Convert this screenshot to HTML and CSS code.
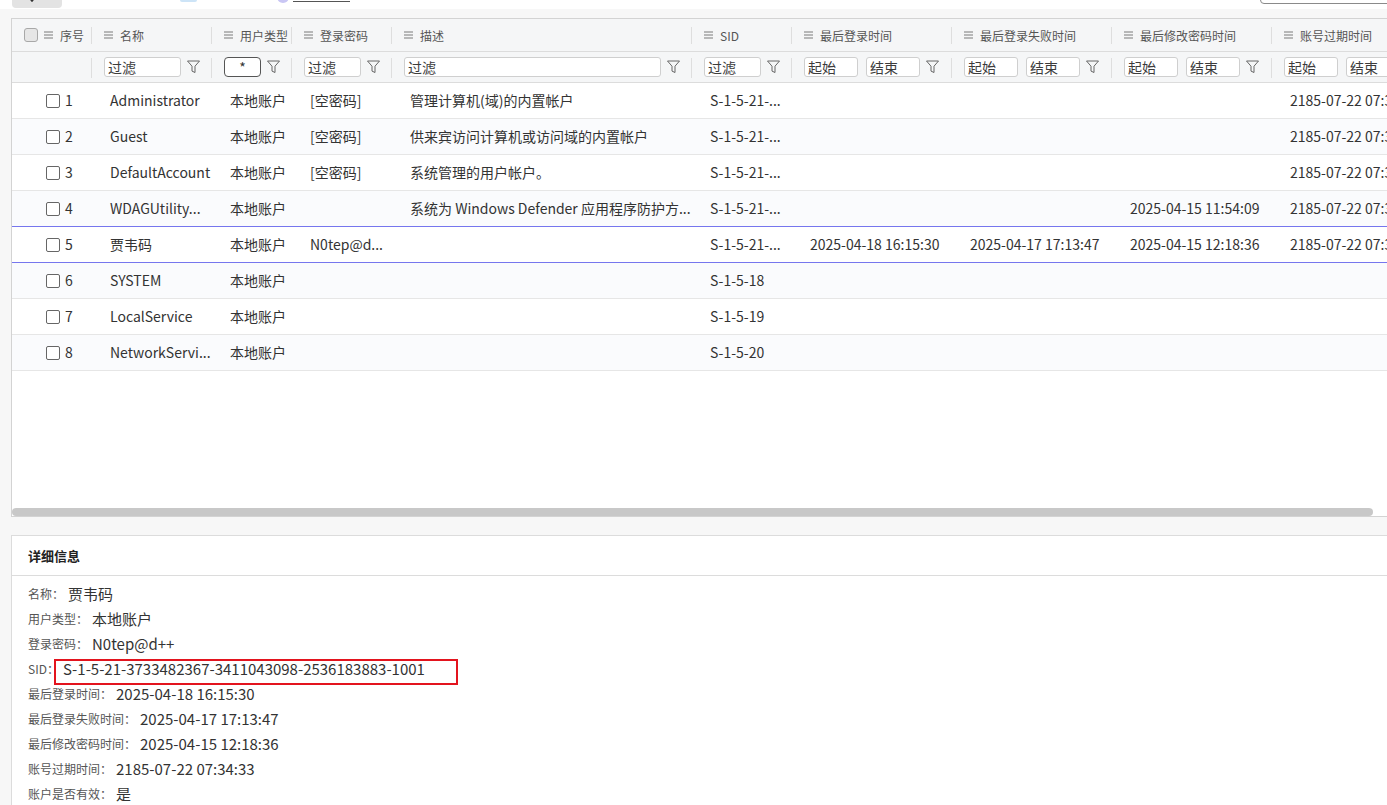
FILE: index.html
```html
<!DOCTYPE html>
<html lang="zh-CN">
<head>
    <meta charset="UTF-8">
    <title>用户账户</title>
    <link rel="stylesheet" href="styles.css">
</head>
<body>
    <div class="toolbar">
        <button class="tb-btn"><svg width="6" height="8" viewBox="0 0 6 8"><path d="M3 0v6M0.5 4l2.5 3 2.5-3" stroke="#333" stroke-width="1.6" fill="none"/></svg></button>
        <span class="tb-check"></span>
        <span class="tb-radio"></span>
        <span class="tb-link"></span>
        <input class="tb-search" type="text">
    </div>

    <div class="grid">
        <div class="grid-view">
            <div class="grid-row grid-head">
                <div class="hcell"><span class="cb cb-head"></span><svg class="menu" viewBox="0 0 9 8"><path d="M0 1h9M0 4h9M0 7h9"/></svg>序号</div>
                <div class="hcell"><svg class="menu" viewBox="0 0 9 8"><path d="M0 1h9M0 4h9M0 7h9"/></svg>名称</div>
                <div class="hcell"><svg class="menu" viewBox="0 0 9 8"><path d="M0 1h9M0 4h9M0 7h9"/></svg>用户类型</div>
                <div class="hcell"><svg class="menu" viewBox="0 0 9 8"><path d="M0 1h9M0 4h9M0 7h9"/></svg>登录密码</div>
                <div class="hcell"><svg class="menu" viewBox="0 0 9 8"><path d="M0 1h9M0 4h9M0 7h9"/></svg>描述</div>
                <div class="hcell"><svg class="menu" viewBox="0 0 9 8"><path d="M0 1h9M0 4h9M0 7h9"/></svg>SID</div>
                <div class="hcell"><svg class="menu" viewBox="0 0 9 8"><path d="M0 1h9M0 4h9M0 7h9"/></svg>最后登录时间</div>
                <div class="hcell"><svg class="menu" viewBox="0 0 9 8"><path d="M0 1h9M0 4h9M0 7h9"/></svg>最后登录失败时间</div>
                <div class="hcell"><svg class="menu" viewBox="0 0 9 8"><path d="M0 1h9M0 4h9M0 7h9"/></svg>最后修改密码时间</div>
                <div class="hcell"><svg class="menu" viewBox="0 0 9 8"><path d="M0 1h9M0 4h9M0 7h9"/></svg>账号过期时间</div>
            </div>

            <div class="grid-row grid-filter">
                <div class="fcell"></div>
                <div class="fcell"><input placeholder="过滤"><svg class="funnel" viewBox="0 0 13 14"><path d="M0.5 1h12l-4.5 5.2v6.3l-3-1.4v-4.9z"/></svg></div>
                <div class="fcell"><input class="has-value" value="*"><svg class="funnel" viewBox="0 0 13 14"><path d="M0.5 1h12l-4.5 5.2v6.3l-3-1.4v-4.9z"/></svg></div>
                <div class="fcell"><input placeholder="过滤"><svg class="funnel" viewBox="0 0 13 14"><path d="M0.5 1h12l-4.5 5.2v6.3l-3-1.4v-4.9z"/></svg></div>
                <div class="fcell"><input placeholder="过滤"><svg class="funnel" viewBox="0 0 13 14"><path d="M0.5 1h12l-4.5 5.2v6.3l-3-1.4v-4.9z"/></svg></div>
                <div class="fcell"><input placeholder="过滤"><svg class="funnel" viewBox="0 0 13 14"><path d="M0.5 1h12l-4.5 5.2v6.3l-3-1.4v-4.9z"/></svg></div>
                <div class="fcell"><input class="date" placeholder="起始"><input class="date" placeholder="结束"><svg class="funnel" viewBox="0 0 13 14"><path d="M0.5 1h12l-4.5 5.2v6.3l-3-1.4v-4.9z"/></svg></div>
                <div class="fcell"><input class="date" placeholder="起始"><input class="date" placeholder="结束"><svg class="funnel" viewBox="0 0 13 14"><path d="M0.5 1h12l-4.5 5.2v6.3l-3-1.4v-4.9z"/></svg></div>
                <div class="fcell"><input class="date" placeholder="起始"><input class="date" placeholder="结束"><svg class="funnel" viewBox="0 0 13 14"><path d="M0.5 1h12l-4.5 5.2v6.3l-3-1.4v-4.9z"/></svg></div>
                <div class="fcell"><input class="date" placeholder="起始"><input class="date" placeholder="结束"><svg class="funnel" viewBox="0 0 13 14"><path d="M0.5 1h12l-4.5 5.2v6.3l-3-1.4v-4.9z"/></svg></div>
            </div>

            <div class="grid-row row">
                <div class="c0"><span class="cb"></span>1</div>
                <div>Administrator</div><div>本地账户</div><div>[空密码]</div>
                <div>管理计算机(域)的内置帐户</div><div>S-1-5-21-...</div>
                <div></div><div></div><div></div><div>2185-07-22 07:34:33</div>
            </div>
            <div class="grid-row row alt">
                <div class="c0"><span class="cb"></span>2</div>
                <div>Guest</div><div>本地账户</div><div>[空密码]</div>
                <div>供来宾访问计算机或访问域的内置帐户</div><div>S-1-5-21-...</div>
                <div></div><div></div><div></div><div>2185-07-22 07:34:33</div>
            </div>
            <div class="grid-row row">
                <div class="c0"><span class="cb"></span>3</div>
                <div>DefaultAccount</div><div>本地账户</div><div>[空密码]</div>
                <div>系统管理的用户帐户。</div><div>S-1-5-21-...</div>
                <div></div><div></div><div></div><div>2185-07-22 07:34:33</div>
            </div>
            <div class="grid-row row alt">
                <div class="c0"><span class="cb"></span>4</div>
                <div>WDAGUtility...</div><div>本地账户</div><div></div>
                <div>系统为 Windows Defender 应用程序防护方...</div><div>S-1-5-21-...</div>
                <div></div><div></div><div>2025-04-15 11:54:09</div><div>2185-07-22 07:34:33</div>
            </div>
            <div class="grid-row row selected">
                <div class="c0"><span class="cb"></span>5</div>
                <div>贾韦码</div><div>本地账户</div><div>N0tep@d...</div>
                <div></div><div>S-1-5-21-...</div>
                <div>2025-04-18 16:15:30</div><div>2025-04-17 17:13:47</div><div>2025-04-15 12:18:36</div><div>2185-07-22 07:34:33</div>
            </div>
            <div class="grid-row row alt">
                <div class="c0"><span class="cb"></span>6</div>
                <div>SYSTEM</div><div>本地账户</div><div></div>
                <div></div><div>S-1-5-18</div>
                <div></div><div></div><div></div><div></div>
            </div>
            <div class="grid-row row">
                <div class="c0"><span class="cb"></span>7</div>
                <div>LocalService</div><div>本地账户</div><div></div>
                <div></div><div>S-1-5-19</div>
                <div></div><div></div><div></div><div></div>
            </div>
            <div class="grid-row row alt">
                <div class="c0"><span class="cb"></span>8</div>
                <div>NetworkServi...</div><div>本地账户</div><div></div>
                <div></div><div>S-1-5-20</div>
                <div></div><div></div><div></div><div></div>
            </div>
        </div>
        <div class="hscroll"><div class="hscroll-thumb"></div></div>
    </div>

    <div class="detail">
        <div class="detail-title">详细信息</div>
        <div class="detail-body">
            <div class="line"><span class="lbl">名称：</span><span class="val">贾韦码</span></div>
            <div class="line"><span class="lbl">用户类型：</span><span class="val">本地账户</span></div>
            <div class="line"><span class="lbl">登录密码：</span><span class="val">N0tep@d++</span></div>
            <div class="line"><span class="lbl">SID：</span><span class="val sid">S-1-5-21-3733482367-3411043098-2536183883-1001</span></div>
            <div class="line"><span class="lbl">最后登录时间：</span><span class="val">2025-04-18 16:15:30</span></div>
            <div class="line"><span class="lbl">最后登录失败时间：</span><span class="val">2025-04-17 17:13:47</span></div>
            <div class="line"><span class="lbl">最后修改密码时间：</span><span class="val">2025-04-15 12:18:36</span></div>
            <div class="line"><span class="lbl">账号过期时间：</span><span class="val">2185-07-22 07:34:33</span></div>
            <div class="line"><span class="lbl">账户是否有效：</span><span class="val">是</span></div>
        </div>
    </div>
</body>
</html>
```

FILE: styles.css
```css
body {
    margin: 0;
    background: #f7f7f7;
    font-family: "Noto Sans CJK SC", "Noto Sans", sans-serif;
    color: #333;
    overflow: hidden;
}

/* top toolbar, only its bottom edge shows */
.toolbar {
    height: 9px;
    background: #fff;
    display: flex;
    align-items: flex-end;
    overflow: hidden;
}
.tb-btn {
    flex: none;
    margin: 0 0 1px 12px;
    width: 50px;
    height: 26px;
    padding: 0 0 6px 17px;
    border: none;
    border-radius: 4px;
    background: #e3e3e3;
    display: flex;
    align-items: flex-end;
}
.tb-check {
    flex: none;
    margin: 0 0 7px 118px;
    width: 17px;
    height: 17px;
    border-radius: 2px;
    background: #cde4f7;
}
.tb-radio {
    flex: none;
    margin: 0 0 6px 80px;
    width: 12px;
    height: 12px;
    border-radius: 50%;
    background: #c9c6f4;
}
.tb-link {
    flex: none;
    margin: 0 0 7px 4px;
    width: 57px;
    height: 10px;
    border-bottom: 1px solid #555;
}
.tb-search {
    flex: none;
    margin: 0 -13px 5px auto;
    width: 140px;
    height: 24px;
    box-sizing: border-box;
    border: 1px solid #8a8a8a;
    border-radius: 4px;
}

/* grid */
.grid {
    margin: 9px 0 0 11px;
    width: 1390px;
    background: #fff;
    border: 1px solid #d3d3d3;
    border-right: none;
}
.grid-view {
    height: 489px;
    overflow: hidden;
}
.grid-row {
    display: grid;
    grid-template-columns: 80px 120px 80px 100px 300px 100px 160px 160px 160px 160px;
    width: 1420px;
}
.grid-head {
    height: 32px;
    background: #f5f6f7;
    border-bottom: 1px solid #dcdcdc;
}
.grid-filter {
    height: 30px;
    background: #f5f6f7;
    border-bottom: 1px solid #dcdcdc;
}
.hcell {
    position: relative;
    display: flex;
    align-items: center;
    padding-left: 12px;
    font-size: 12px;
    color: #555;
    white-space: nowrap;
}
.hcell::after,
.fcell::after {
    content: "";
    position: absolute;
    right: 0;
    top: 8px;
    bottom: 7px;
    width: 1px;
    background: #dedede;
}
.fcell::after {
    top: 6px;
    bottom: 4px;
}
.menu {
    width: 9px;
    height: 8px;
    margin-right: 7px;
    flex: none;
}
.menu path {
    stroke: #7a7a7a;
    stroke-width: 1;
}
.cb {
    flex: none;
    width: 14px;
    height: 14px;
    box-sizing: border-box;
    border: 1px solid #666;
    border-radius: 2px;
    background: #fff;
}
.cb-head {
    background: #e6e6e6;
    border-color: #a8a8a8;
    border-radius: 3px;
    margin-right: 6px;
}

.fcell {
    position: relative;
    display: flex;
    align-items: center;
    gap: 6px;
    padding: 0 12px;
}
.fcell input {
    flex: 1;
    min-width: 0;
    height: 20px;
    box-sizing: border-box;
    margin: 0;
    padding: 0 3px;
    border: 1px solid #cfcfcf;
    border-radius: 3px;
    background: #fff;
    font-family: "Noto Sans CJK SC", sans-serif;
    font-size: 14px;
    color: #333;
}
.fcell input::placeholder {
    color: #3c3c3c;
}
.fcell input.date {
    flex: none;
    width: 54px;
}
.fcell input.date + input.date {
    margin-left: 2px;
}
.fcell input.has-value {
    border-color: #555;
    border-radius: 4px;
    text-align: center;
}
.funnel {
    flex: none;
    width: 13px;
    height: 14px;
}
.funnel path {
    fill: none;
    stroke: #666;
    stroke-width: 1;
    stroke-linejoin: round;
}

.row {
    height: 35px;
    border-bottom: 1px solid #e6e6e6;
    font-size: 14px;
}
.row > div {
    padding-left: 18px;
    line-height: 35px;
    white-space: nowrap;
    overflow: hidden;
}
.row > .c0 {
    padding-left: 34px;
    display: flex;
    align-items: center;
    gap: 5px;
}
.row.alt {
    background: #fafbfd;
}
.row.selected {
    position: relative;
    margin-top: -1px;
    border-top: 1px solid #7676ee;
    border-bottom-color: #7676ee;
}

.hscroll {
    height: 8px;
    background: #fff;
}
.hscroll-thumb {
    width: 1361px;
    height: 8px;
    border-radius: 4px;
    background: #c8c8c8;
}

/* detail panel */
.detail {
    margin: 18px 0 0 11px;
    width: 1390px;
    height: 300px;
    background: #fff;
    border: 1px solid #dcdcdc;
    border-right: none;
}
.detail-title {
    height: 39px;
    line-height: 39px;
    padding-left: 16px;
    font-size: 13px;
    font-weight: bold;
    color: #222;
    border-bottom: 1px solid #dcdcdc;
}
.detail-body {
    padding: 5px 16px;
}
.line {
    display: flex;
    align-items: center;
    height: 25px;
}
.lbl {
    font-size: 12px;
    color: #555;
    line-height: 25px;
}
.val {
    margin-left: 4px;
    font-size: 15px;
    color: #333;
    line-height: 25px;
}
.sid {
    position: relative;
}
/* red annotation box around the SID */
.sid::after {
    content: "";
    position: absolute;
    left: -9px;
    top: 3px;
    width: 404px;
    height: 26px;
    box-sizing: border-box;
    border: 2px solid #e3141e;
}
```
